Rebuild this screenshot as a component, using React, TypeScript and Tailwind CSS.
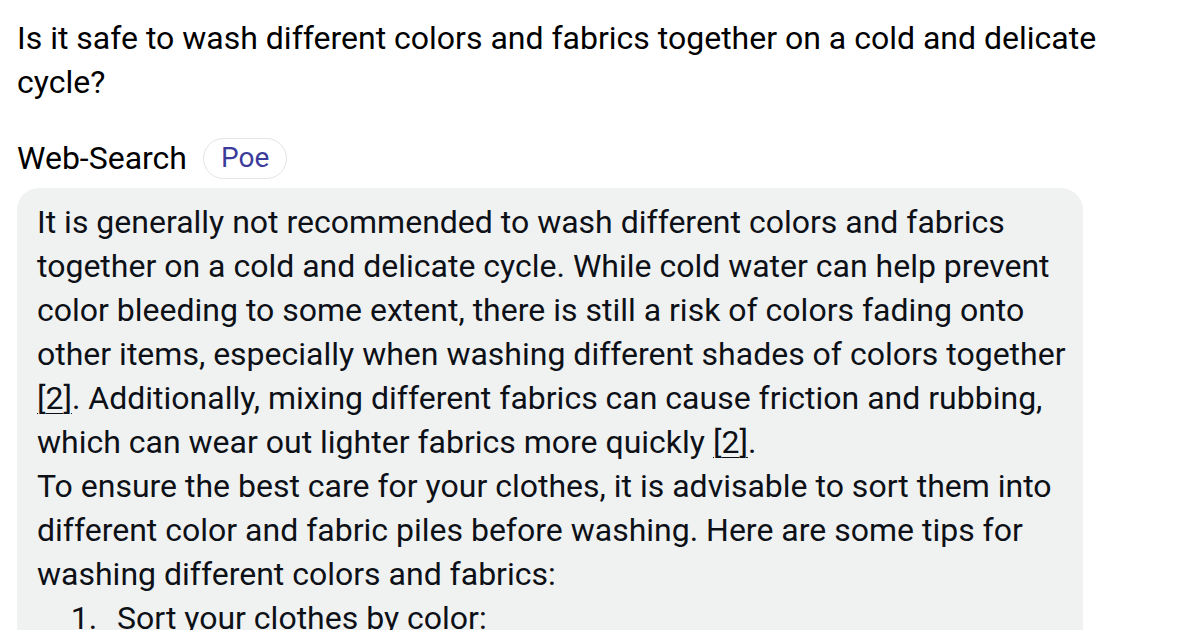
const Cite = ({ n }: { n: number }) => (
  <a className="underline underline-offset-4 decoration-1 text-[#0d1117]" href="#">
    [{n}]
  </a>
);

export default function App() {
  return (
    <div className="w-[1200px] h-[630px] overflow-hidden bg-white font-['Roboto',sans-serif]">
      <div className="px-[17px] pt-4">
        <p className="text-[32px] leading-[44px] text-black pr-[60px]">
          Is it safe to wash different colors and fabrics together on a cold and delicate cycle?
        </p>

        <div className="flex items-center gap-4 mt-[32px]">
          <span className="text-[32px] leading-[44px] text-black">Web-Search</span>
          <span className="h-[41px] px-[17px] flex items-center rounded-full border border-[#e2e4e6] text-[28px] text-[#3b3b9c]">
            Poe
          </span>
        </div>

        <div className="mt-[8px] w-[1066px] rounded-[22px] bg-[#f0f2f2] pl-5 pr-4 pt-3 pb-6 text-[32px] leading-[44px] text-[#0d1117]">
          <p>
            It is generally not recommended to wash different colors and fabrics together on a cold
            and delicate cycle. While cold water can help prevent color bleeding to some extent, there
            is still a risk of colors fading onto other items, especially when washing different shades
            of colors together <Cite n={2} />. Additionally, mixing different fabrics can cause friction
            and rubbing, which can wear out lighter fabrics more quickly <Cite n={2} />.
          </p>
          <p>
            To ensure the best care for your clothes, it is advisable to sort them into different color
            and fabric piles before washing. Here are some tips for washing different colors and fabrics:
          </p>
          <ol className="list-decimal pl-[68px]">
            <li className="pl-3">Sort your clothes by color:</li>
          </ol>
        </div>
      </div>
    </div>
  );
}
